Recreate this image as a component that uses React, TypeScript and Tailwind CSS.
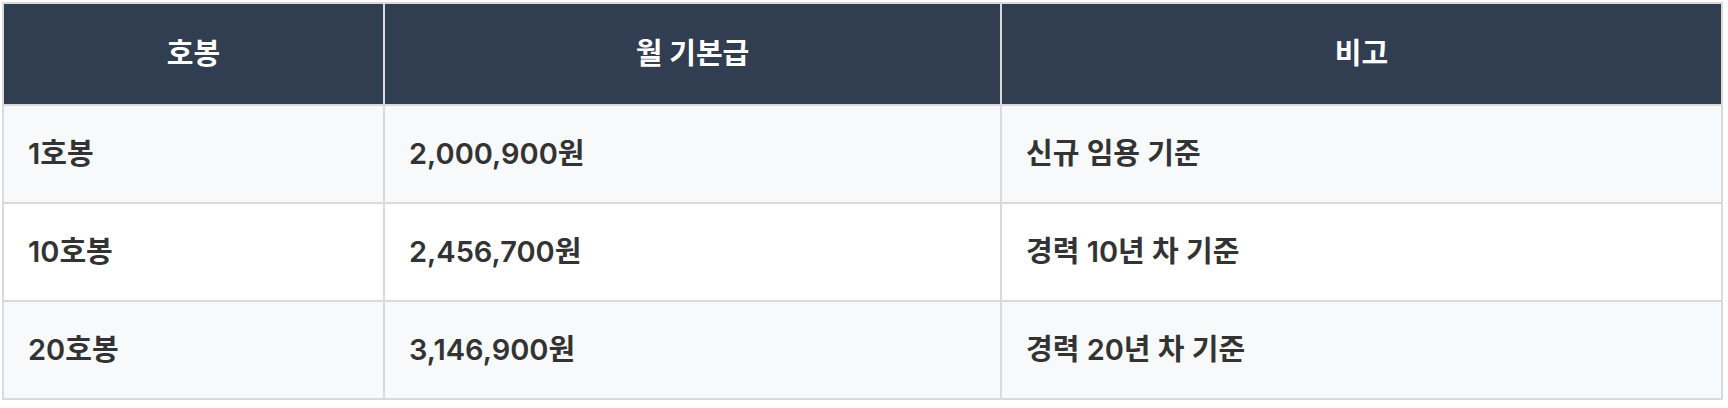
import React from 'react'

type Row = { step: string; pay: string; note: string }

const rows: Row[] = [
  { step: '1호봉', pay: '2,000,900원', note: '신규 임용 기준' },
  { step: '10호봉', pay: '2,456,700원', note: '경력 10년 차 기준' },
  { step: '20호봉', pay: '3,146,900원', note: '경력 20년 차 기준' },
]

// Latin/digits in Inter, Hangul falls through to Noto CJK
const font = { fontFamily: 'Inter, "Noto Sans CJK KR", "Noto Sans", sans-serif' }

export default function App() {
  return (
    <div className="min-h-screen bg-white pl-[2px] pt-[2px]" style={font}>
      <div className="grid w-[1721px] grid-cols-[379px_615px_719px] gap-[2px] bg-[#dadada] p-[2px]">
        {/* header */}
        {['호봉', '월 기본급', '비고'].map((h) => (
          <div
            key={h}
            className="flex h-[100px] items-center justify-center bg-[#313d50] text-[29px] font-bold text-white"
          >
            {h}
          </div>
        ))}

        {/* body rows, striped */}
        {rows.map((r, i) => {
          const bg = i % 2 === 0 ? 'bg-[#f8f9fa]' : 'bg-white'
          return (
            <React.Fragment key={r.step}>
              <div className={`flex h-[96px] items-center px-6 text-[29px] font-semibold text-[#333333] ${bg}`}>
                {r.step}
              </div>
              <div className={`flex h-[96px] items-center px-6 text-[29px] font-semibold text-[#333333] ${bg}`}>
                {r.pay}
              </div>
              <div className={`flex h-[96px] items-center px-6 text-[29px] font-semibold text-[#333333] ${bg}`}>
                {r.note}
              </div>
            </React.Fragment>
          )
        })}
      </div>
    </div>
  )
}
